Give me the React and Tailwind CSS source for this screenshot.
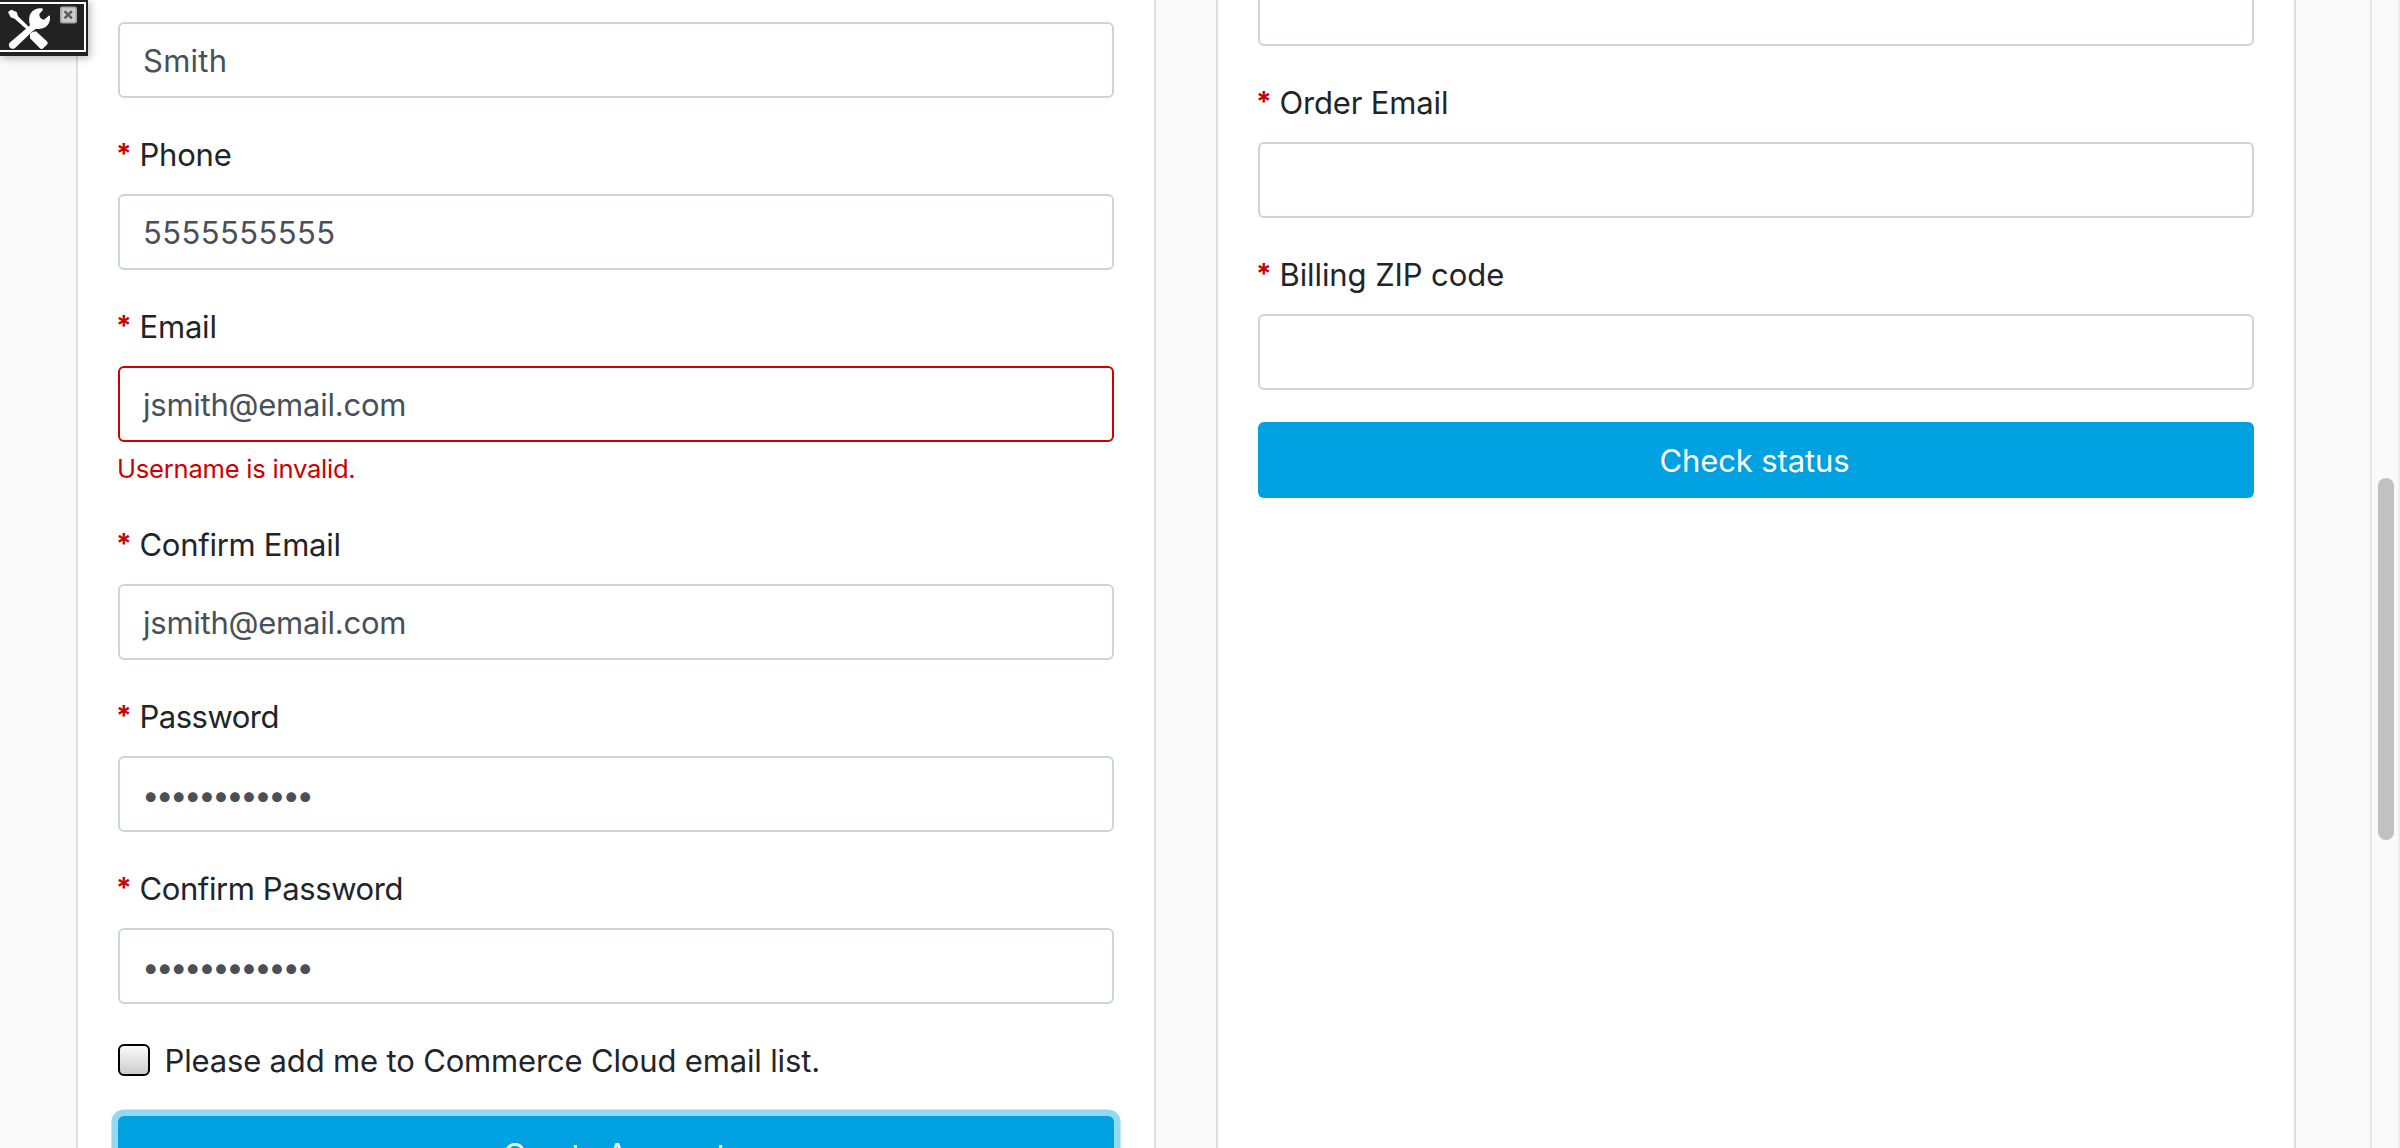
function Label({ children, tracking }) {
  return (
    <label className="flex h-12 items-center pt-[3px] text-[31px] text-[#212529]">
      <span className="-mt-[3px] -ml-[2px] w-[23.5px] shrink-0 text-[28px] font-bold text-[#cc0000]">*</span>
      <span className={tracking}>{children}</span>
    </label>
  );
}

function Field({ label, labelTracking, value, tracking = "", error }) {
  return (
    <div className="mb-8">
      {label && <Label tracking={labelTracking}>{label}</Label>}
      <div
        className={`mt-4 flex h-[76px] items-center rounded-[6px] border-2 bg-white pt-[3px] pl-[23px] text-[31px] text-[#495057] ${
          error ? "border-[#cc0000]" : "border-[#ced4da]"
        }`}
      >
        <span className={tracking}>{value}</span>
      </div>
      {error && (
        <p className="mt-2 flex h-[38px] items-center -ml-[1px] text-[25.6px] tracking-[-0.25px] text-[#cc0000]">{error}</p>
      )}
    </div>
  );
}

function ToolsIcon() {
  return (
    <svg viewBox="0 0 180 168" className="h-[56px] w-[60px]" fill="#fff">
      <path d="M24 36 L34 29 L50 36 L54 49 L90 84 L83 91 L44 56 L32 52 Z" />
      <path d="M90 102 Q96 94 108 94 L142 125 Q144 130 142 133 L128 146 Q123 148 119 144 L90 115 Z" />
      <path d="M28 129 L80 85 L90 76 Q84 55 92 40 Q104 23 126 25 Q130 27 128 31 L118 42 Q117 56 132 59 L143 50 Q148 43 150 49 Q152 70 136 82 Q121 89 108 86 L98 94 L46 143 Q40 149 32 145 Q24 139 28 129 Z" />
    </svg>
  );
}

function ToolsWidget() {
  return (
    <div className="absolute top-0 left-0 h-[56px] w-[88px] bg-[#222] shadow-[2px_2px_8px_rgba(0,0,0,0.28)]">
      <div className="mt-[2px] h-[50px] w-[86px] border-y-2 border-r-2 border-white" />
      <div className="absolute top-0 left-0">
        <ToolsIcon />
      </div>
      <svg viewBox="0 0 18 18" className="absolute top-[6px] left-[60px] h-[18px] w-[17px]">
        <rect x="0" y="0" width="18" height="18" rx="2.5" fill="#a8a8a8" />
        <rect x="1.8" y="1.8" width="14.4" height="14.4" rx="1.5" fill="#cecece" />
        <path d="M4.8 4.8 L12.6 12.6 M12.6 4.8 L4.8 12.6" stroke="#5c5c5c" strokeWidth="2.6" />
      </svg>
    </div>
  );
}

function Scrollbar() {
  return (
    <div className="flex h-full w-[30px] shrink-0 justify-start border-x-2 border-l-[#e7e7e7] border-r-[#ededed] bg-[#fafafa] pt-[478px] pl-[6px]">
      <div className="h-[362px] w-[16px] rounded-full bg-[#c1c1c1]" />
    </div>
  );
}

const dots = "••••••••••••";

export default function App() {
  return (
    <div className="relative flex h-[1148px] w-[2400px] overflow-hidden bg-[#f9f9f9] font-['Inter',sans-serif]">
      <main className="flex flex-1 gap-[60px] pl-[76px]">
        <section className="h-[1300px] w-[1080px] shrink-0 border-x-2 border-[#dfdfdf] bg-white px-10 pt-[6px]">
          <Field value="Smith" tracking="tracking-[0.25px]" />
          <Field label="Phone" labelTracking="tracking-[-0.21px]" value="5555555555" tracking="tracking-[0.4px]" />
          <Field
            label="Email"
            labelTracking="tracking-[-0.2px]"
            value="jsmith@email.com"
            tracking="tracking-[-0.24px]"
            error="Username is invalid."
          />
          <Field
            label="Confirm Email"
            labelTracking="tracking-[-0.28px]"
            value="jsmith@email.com"
            tracking="tracking-[-0.24px]"
          />
          <Field label="Password" labelTracking="tracking-[-0.5px]" value={dots} tracking="-ml-[1px] tracking-[-3.4px]" />
          <Field
            label="Confirm Password"
            labelTracking="tracking-[-0.4px]"
            value={dots}
            tracking="-ml-[1px] tracking-[-3.4px]"
          />
          <label className="mb-8 flex h-12 items-center gap-[14.5px] text-[31px] text-[#212529]">
            <span className="h-8 w-8 shrink-0 rounded-[6px] border-2 border-black bg-linear-to-b from-[#fafafa] to-[#cccccc]" />
            <span className="pt-[3px] tracking-[-0.16px]">Please add me to Commerce Cloud email list.</span>
          </label>
          <button className="flex h-[76px] w-full items-center justify-center rounded-[6px] bg-[#00a1e0] pt-[3px] pr-[3px] text-[31px] tracking-[-0.4px] text-white shadow-[0_0_0_6.6px_rgba(0,161,224,0.42)]">
            Create Account
          </button>
        </section>
        <section className="h-[1300px] w-[1080px] shrink-0 border-x-2 border-[#dfdfdf] bg-white px-10">
          <div className="-mt-[46px]">
            <Field value="" />
            <Field label="Order Email" labelTracking="tracking-[-0.16px]" value="" />
            <Field label="Billing ZIP code" labelTracking="tracking-[-0.09px]" value="" />
            <button className="flex h-[76px] w-full items-center justify-center rounded-[6px] bg-[#00a1e0] pt-[3px] pr-[3px] text-[31px] tracking-[-0.12px] text-white">
              Check status
            </button>
          </div>
        </section>
      </main>
      <Scrollbar />
      <ToolsWidget />
    </div>
  );
}
